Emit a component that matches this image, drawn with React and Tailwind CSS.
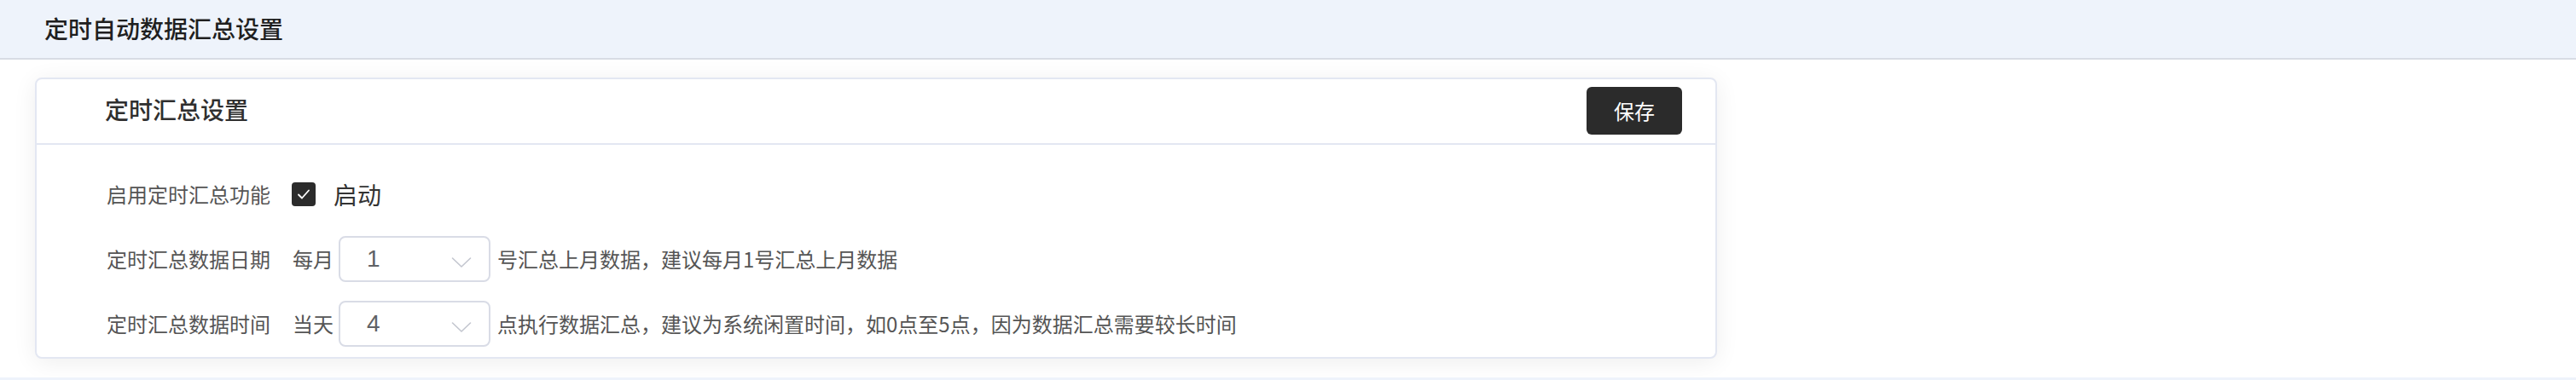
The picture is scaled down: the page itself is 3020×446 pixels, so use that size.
import React from "react";

function Chevron() {
  return (
    <svg width="24" height="14" viewBox="0 0 24 14" fill="none" className="mt-[8px]">
      <path d="M1.5 2 L12 12 L22.5 2" stroke="#c3c6cf" strokeWidth="1.6" strokeLinecap="round" strokeLinejoin="round" />
    </svg>
  );
}

function Select({ value }) {
  return (
    <div className="ml-[6px] w-[178px] h-[54px] border-2 border-[#d9dce6] rounded-[8px] flex items-center justify-between pl-[31px] pr-[20px] bg-white">
      <span className="text-[28px] text-[#606266] font-['Liberation_Sans','Noto_Sans_CJK_SC',sans-serif]">{value}</span>
      <Chevron />
    </div>
  );
}

export default function App() {
  return (
    <div className="w-[3020px] h-[446px] bg-white flex flex-col font-['Noto_Sans_CJK_SC','Noto_Sans',sans-serif] overflow-hidden">
      <div className="h-[70px] shrink-0 bg-[#eef3fb] border-b-2 border-[#d8dce4] flex items-center pl-[52px] pb-[2px]">
        <span className="text-[28px] font-medium text-[#1f1f1f] leading-none">定时自动数据汇总设置</span>
      </div>
      <div className="flex-1 bg-white pl-[41px] pt-[21px]">
        <div className="w-[1972px] h-[330px] border-2 border-[#e3e7f2] rounded-[8px] bg-white shadow-[0_4px_28px_rgba(0,0,0,0.07)] flex flex-col">
          <div className="h-[77px] shrink-0 border-b-2 border-[#e3e7f2] flex items-center justify-between pl-[80px] pr-[39px]">
            <span className="text-[28px] font-medium text-[#2f2f2f] leading-none mt-[-6px]">定时汇总设置</span>
            <button className="w-[112px] h-[56px] bg-[#2b2b2b] rounded-[6px] text-white text-[24px] flex items-center justify-center mt-[-2px]">保存</button>
          </div>
          <div className="flex flex-col gap-[22px] pt-[31px] pl-[82px]">
            <div className="h-[54px] flex items-center">
              <span className="w-[217px] text-[24px] text-[#555555]">启用定时汇总功能</span>
              <div className="w-[28px] h-[28px] rounded-[4px] bg-[#2b2b2b] flex items-center justify-center">
                <svg width="18" height="18" viewBox="0 0 18 18" fill="none">
                  <path d="M3 9.5 L7 13.5 L15 4.5" stroke="white" strokeWidth="1.8" strokeLinecap="round" strokeLinejoin="round" />
                </svg>
              </div>
              <span className="ml-[21px] text-[28px] text-[#333333]">启动</span>
            </div>
            <div className="h-[54px] flex items-center">
              <span className="w-[218px] text-[24px] text-[#555555]">定时汇总数据日期</span>
              <span className="text-[24px] text-[#555555]">每月</span>
              <Select value="1" />
              <span className="ml-[8px] text-[24px] text-[#555555]">号汇总上月数据，建议每月1号汇总上月数据</span>
            </div>
            <div className="h-[54px] flex items-center">
              <span className="w-[218px] text-[24px] text-[#555555]">定时汇总数据时间</span>
              <span className="text-[24px] text-[#555555]">当天</span>
              <Select value="4" />
              <span className="ml-[8px] text-[24px] text-[#555555]">点执行数据汇总，建议为系统闲置时间，如0点至5点，因为数据汇总需要较长时间</span>
            </div>
          </div>
        </div>
      </div>
      <div className="h-[3px] shrink-0 bg-[#eef3fb]" />
    </div>
  );
}
